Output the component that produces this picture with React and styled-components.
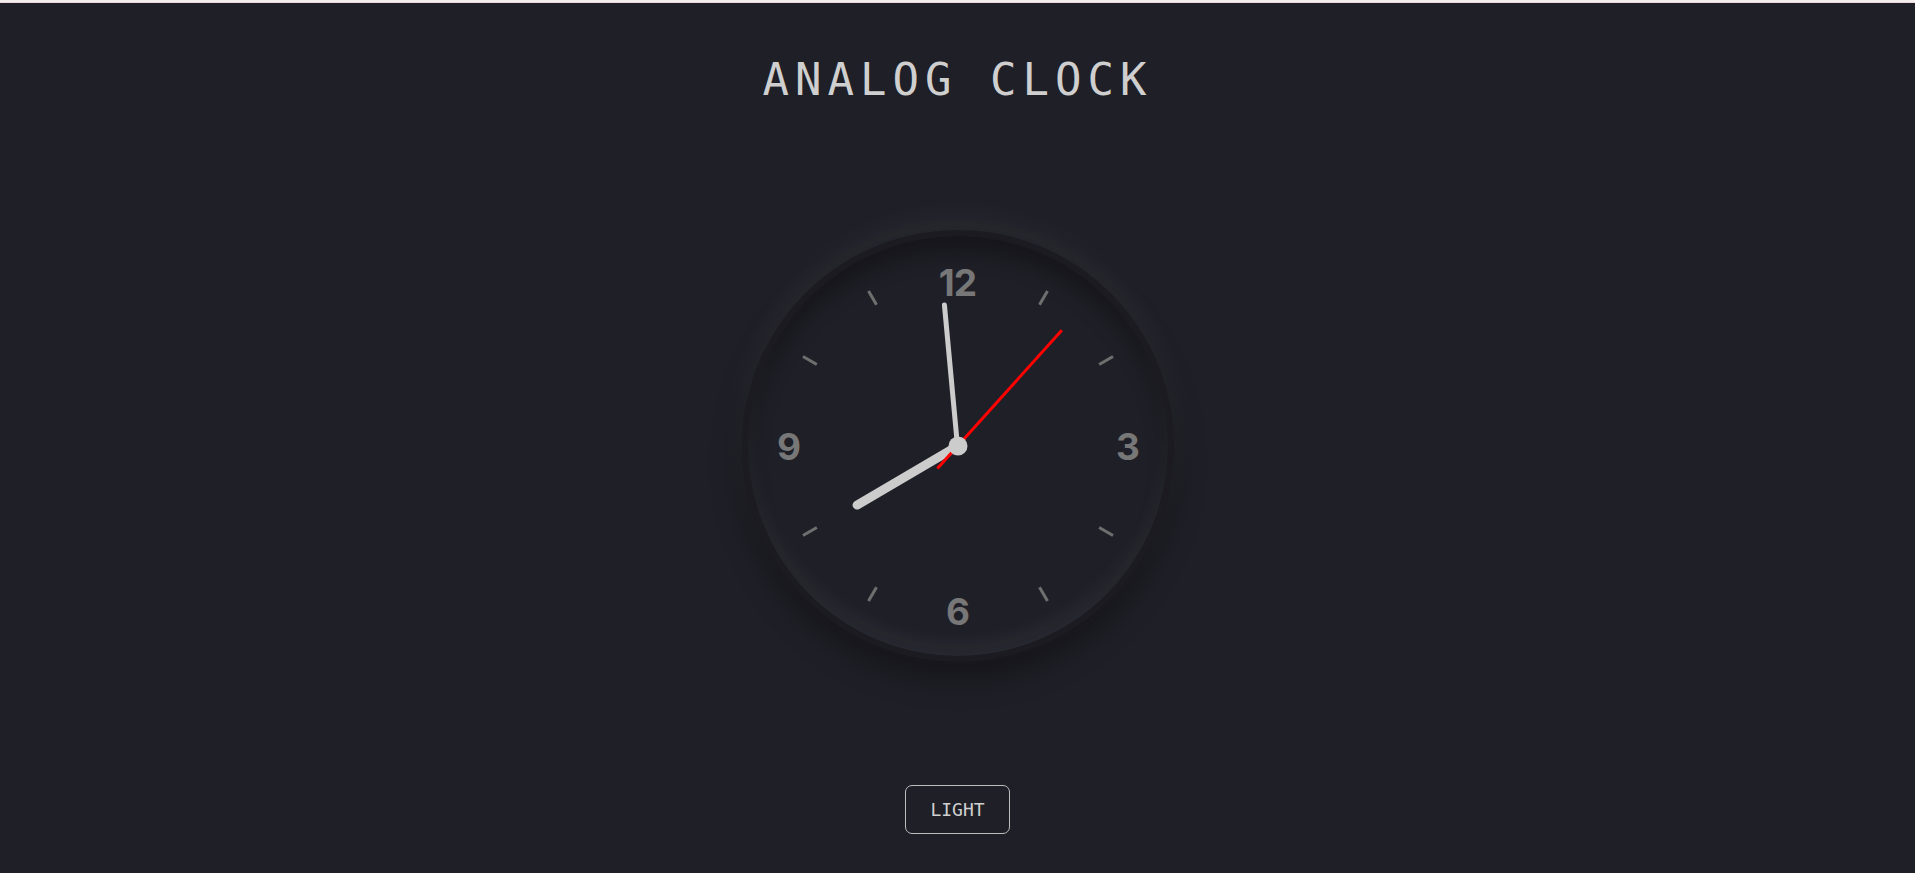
import styled, { createGlobalStyle } from 'styled-components';

const GlobalStyle = createGlobalStyle`
  html, body {
    margin: 0;
    padding: 0;
    background: #1f1f27;
  }
  * {
    box-sizing: border-box;
  }
`;

// the time shown in the screenshot
const time = { h: 7, m: 59, s: 7 };

const ticks = [30, 60, 120, 150, 210, 240, 300, 330];

const numerals = [
  { label: '12', x: 0, y: -164 },
  { label: '3', x: 170, y: 0 },
  { label: '6', x: 0, y: 165 },
  { label: '9', x: -169, y: 0 },
];

const App = () => {
  const secAngle = time.s * 6;
  const minAngle = time.m * 6 + time.s * 0.1;
  const hourAngle = (time.h % 12) * 30 + time.m * 0.5 + time.s / 120;

  return (
    <>
      <GlobalStyle />
      <TopStrip />
      <Page>
        <Title>ANALOG CLOCK</Title>
        <Clock>
          {ticks.map(angle => (
            <Tick key={angle} $angle={angle} />
          ))}
          {numerals.map(({ label, x, y }) => (
            <Numeral key={label} $x={x} $y={y}>
              {label}
            </Numeral>
          ))}
          <Hand $angle={hourAngle} $length={121} $width={9} $tail={0} />
          <Hand $angle={minAngle} $length={144} $width={5} $tail={0} />
          <Hand
            $angle={secAngle}
            $length={156}
            $width={2.5}
            $tail={30}
            $color="#ff0000"
          />
          <CenterDot />
        </Clock>
        <ModeButton>LIGHT</ModeButton>
      </Page>
    </>
  );
};

export default App;

const TopStrip = styled.div`
  height: 3px;
  background: #f6eeee;
  border-bottom: 1px solid #ead8d8;
`;

const Page = styled.div`
  min-height: calc(100vh - 3px);
  padding-top: 51px;
  display: flex;
  flex-direction: column;
  align-items: center;
  background: #1f1f27;
`;

const Title = styled.h1`
  margin: 0;
  font-family: 'DejaVu Sans Mono', 'Liberation Mono', monospace;
  font-size: 44px;
  font-weight: 400;
  line-height: 52px;
  letter-spacing: 6px;
  color: #cfcfcf;
`;

const Clock = styled.div`
  position: relative;
  margin-top: 124px;
  width: 432px;
  height: 432px;
  border-radius: 50%;
  border: 6px solid #1b1b21;
  background: #1f1f27;
  box-shadow:
    0 -12px 30px rgba(255, 255, 255, 0.05),
    inset 0 -12px 20px rgba(255, 255, 255, 0.05),
    0 16px 30px rgba(0, 0, 0, 0.35),
    inset 0 16px 20px rgba(0, 0, 0, 0.3);
`;

const Tick = styled.div`
  position: absolute;
  left: 50%;
  top: 50%;
  width: 3px;
  height: 16px;
  background: #6f6f6f;
  transform: translate(-50%, -50%) rotate(${p => p.$angle}deg)
    translateY(-171px);
`;

const Numeral = styled.div`
  position: absolute;
  left: calc(50% + ${p => p.$x}px);
  top: calc(50% + ${p => p.$y}px);
  transform: translate(-50%, -50%);
  font-family: Inter, 'Noto Sans', sans-serif;
  font-weight: 700;
  font-size: 37px;
  line-height: 1;
  letter-spacing: -1px;
  color: #777777;
`;

const Hand = styled.div`
  position: absolute;
  left: 50%;
  bottom: 50%;
  width: ${p => p.$width}px;
  height: ${p => p.$length + p.$tail}px;
  margin-left: ${p => -p.$width / 2}px;
  margin-bottom: ${p => -p.$tail}px;
  background: ${p => p.$color || '#cccccc'};
  border-radius: ${p => (p.$color ? 0 : p.$width / 2)}px;
  transform-origin: 50% calc(100% - ${p => p.$tail}px);
  transform: rotate(${p => p.$angle}deg);
`;

const CenterDot = styled.div`
  position: absolute;
  left: 50%;
  top: 50%;
  width: 19px;
  height: 19px;
  border-radius: 50%;
  background: #cccccc;
  transform: translate(-50%, -50%);
`;

const ModeButton = styled.button`
  margin-top: 123px;
  padding: 13px 24px 12px;
  font-family: 'DejaVu Sans Mono', 'Liberation Mono', monospace;
  font-size: 18px;
  line-height: 22px;
  color: #d0d0d0;
  background: transparent;
  border: 1px solid #bdbdbd;
  border-radius: 7px;
  cursor: pointer;
`;
